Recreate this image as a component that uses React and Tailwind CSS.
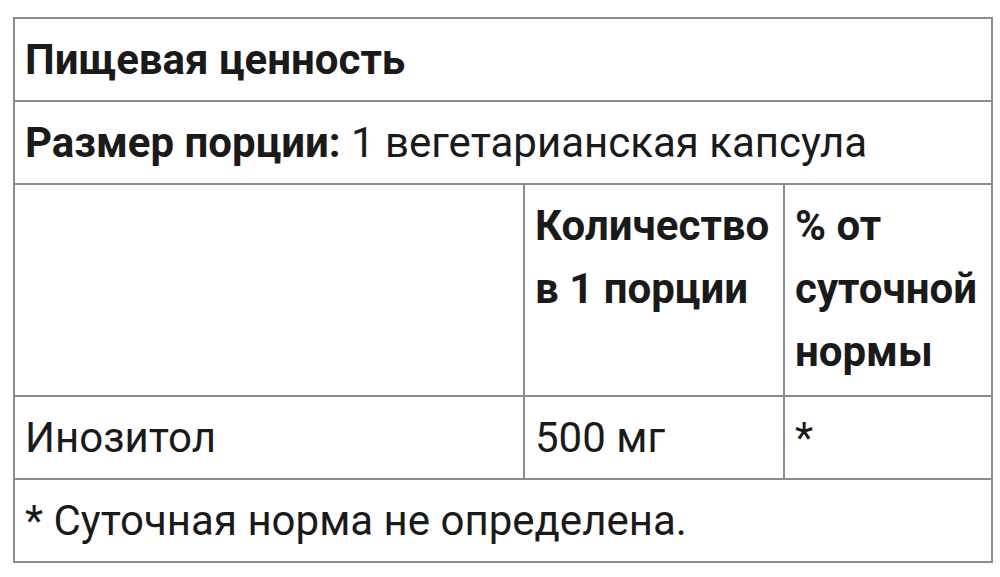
export default function App() {
    const cell = "border-2 border-[#8c8c8c] px-[10px] py-[9px] align-top";

    return (
        <div className="min-h-screen bg-white pt-[17px] pl-[13px]" style={{ fontFamily: "Roboto, 'Noto Sans', sans-serif" }}>
            <table className="table-fixed border-collapse w-[978px] text-[42px] leading-[63px] text-[#1a1a1a]">
                <colgroup>
                    <col className="w-[510px]" />
                    <col className="w-[260px]" />
                    <col className="w-[208px]" />
                </colgroup>
                <tbody>
                    <tr>
                        <td colSpan={3} className={cell + " font-bold"}>Пищевая ценность</td>
                    </tr>
                    <tr>
                        <td colSpan={3} className={cell}>
                            <span className="font-bold">Размер порции:</span> 1 вегетарианская капсула
                        </td>
                    </tr>
                    <tr>
                        <td className={cell}></td>
                        <td className={cell + " font-bold pb-[12px]"}>Количество в 1 порции</td>
                        <td className={cell + " font-bold pb-[12px]"}>% от суточной нормы</td>
                    </tr>
                    <tr>
                        <td className={cell}>Инозитол</td>
                        <td className={cell}>500 мг</td>
                        <td className={cell}>*</td>
                    </tr>
                    <tr>
                        <td colSpan={3} className={cell}>* Суточная норма не определена.</td>
                    </tr>
                </tbody>
            </table>
        </div>
    );
}
